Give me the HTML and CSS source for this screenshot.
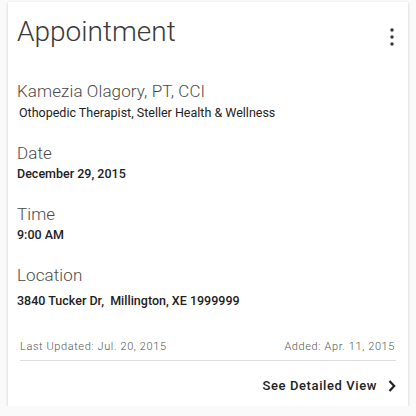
FILE: index.html
```html
<!DOCTYPE html>
<html>
<head>
<meta charset="utf-8">
<link rel="stylesheet" href="styles.css">
</head>
<body>
<div class="card">
  <div class="header">
    <h1 class="title">Appointment</h1>
    <svg class="menu" width="4" height="18" viewBox="0 0 4 18"><circle cx="2" cy="2" r="1.7" fill="#333"/><circle cx="2" cy="9" r="1.7" fill="#333"/><circle cx="2" cy="16" r="1.7" fill="#333"/></svg>
  </div>
  <div class="field first">
    <div class="label">Kamezia Olagory, PT, CCI</div>
    <div class="sub">Othopedic Therapist, Steller Health &amp; Wellness</div>
  </div>
  <div class="field">
    <div class="label">Date</div>
    <div class="value">December 29, 2015</div>
  </div>
  <div class="field">
    <div class="label">Time</div>
    <div class="value">9:00 AM</div>
  </div>
  <div class="field">
    <div class="label">Location</div>
    <div class="value addr">3840 Tucker Dr,&nbsp; Millington, XE 1999999</div>
  </div>
  <div class="meta">
    <span>Last Updated: Jul. 20, 2015</span>
    <span>Added: Apr. 11, 2015</span>
  </div>
  <div class="footer">
    <span class="link">See Detailed View</span>
    <svg class="chev" width="8" height="12" viewBox="0 0 8 12"><path d="M1.5 1 L6.2 6 L1.5 11" fill="none" stroke="#222" stroke-width="2.2"/></svg>
  </div>
</div>
</body>
</html>
```
FILE: styles.css
```css
* { box-sizing: border-box; }
html, body { margin: 0; padding: 0; background: #fafafa; }
body { padding: 2px 8px 0 8px; font-family: Roboto, "Liberation Sans", sans-serif; color: #212121; }
.card {
  background: #fff;
  width: 400px;
  height: 404px;
  box-shadow: 0 1px 3px rgba(0,0,0,0.14), 0 1px 2px rgba(0,0,0,0.08);
  padding: 0 12px 0 12px;
}
.header { display: flex; justify-content: space-between; align-items: flex-start; padding-top: 12px; }
.title { margin: 0 0 0 -3px; font-family: "Roboto Light", Roboto, sans-serif; font-weight: 300; font-size: 28px; line-height: 36px; color: #3a3a3a; }
.menu { margin-top: 14px; margin-right: 2px; }
.field { margin-top: 22px; margin-left: -3px; }
.field.first { margin-top: 31px; }
.label { font-family: "Roboto Light", Roboto, sans-serif; font-weight: 300; font-size: 17px; line-height: 20px; color: #4a4a4a; letter-spacing: 0.1px; }
.sub { font-size: 12.5px; line-height: 17px; color: #222; margin-top: 3px; margin-left: 2px; }
.value { font-size: 12.5px; line-height: 16px; font-weight: 500; color: #222; margin-top: 3px; }
.value.addr { margin-top: 8px; }
.meta { display: flex; justify-content: space-between; font-family: "Roboto Light", Roboto, sans-serif; font-weight: 300; font-size: 11px; line-height: 14px; color: #555; letter-spacing: 0.6px; margin-top: 31px; padding: 0 1px 6px 0; border-bottom: 1px solid #ddd; }
.footer { display: flex; justify-content: flex-end; align-items: center; margin-top: 17px; }
.link { font-size: 13px; font-weight: 500; letter-spacing: 0.6px; color: #222; }
.chev { margin-left: 11px; }
```
